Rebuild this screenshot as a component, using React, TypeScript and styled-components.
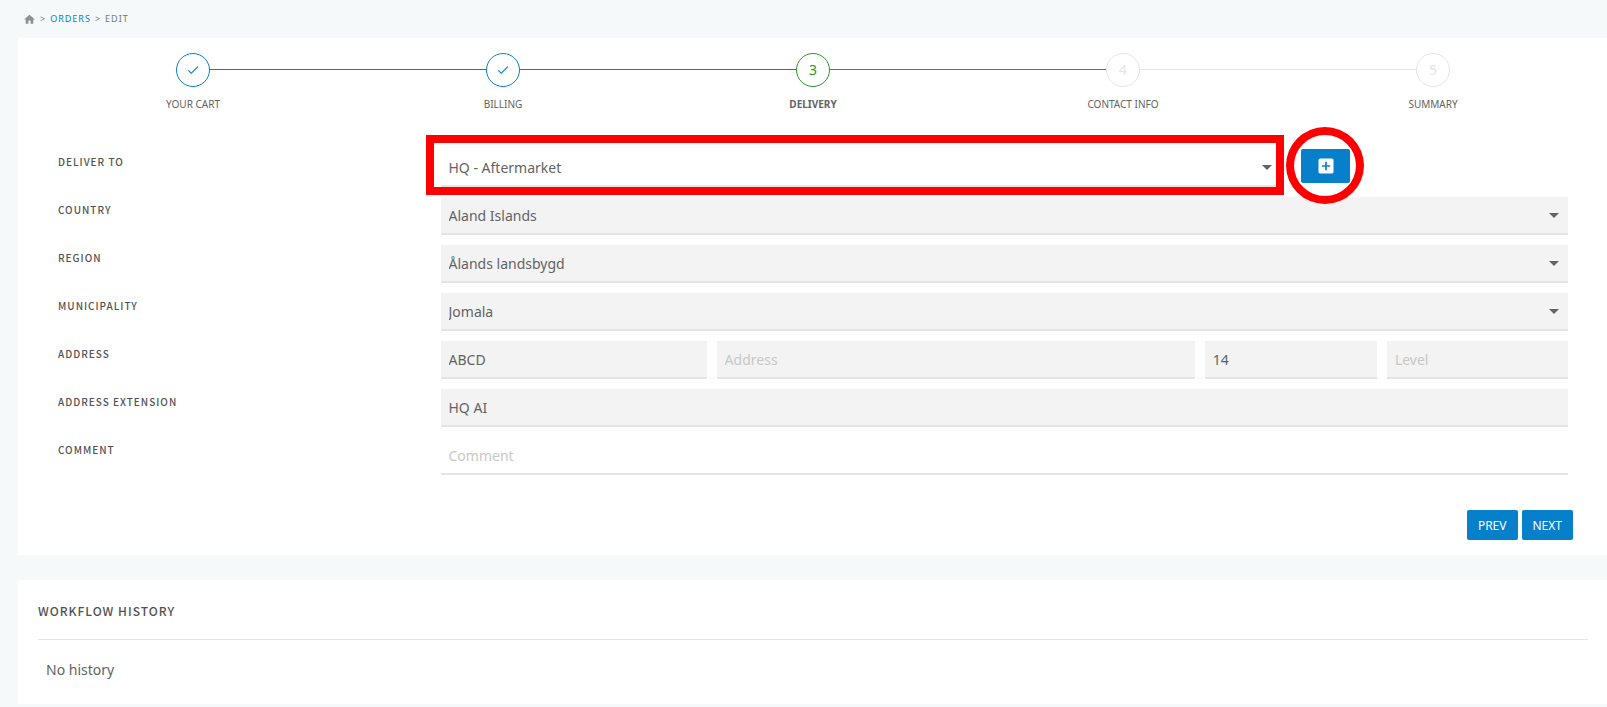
import React from "react";
import styled, { createGlobalStyle } from "styled-components";

const colors = {
  page: "#f5f9fa",
  blue: "#0780cb",
  green: "#28982a",
  idle: "#e5e5e5",
  text: "#636363",
  title: "#525252",
  field: "#f3f3f3",
  mark: "#ff0000",
};

const GlobalStyle = createGlobalStyle`
  *, *::before, *::after { box-sizing: border-box; }
  body {
    margin: 0;
    background: ${colors.page};
    color: ${colors.text};
    font: 14px/20px "Noto Sans", sans-serif;
  }
  button, input, select { font: inherit; color: inherit; }
`;

const titleFont = `"Noto Sans CJK SC", "Noto Sans", sans-serif`;

const Page = styled.main`
  padding-left: 18px;
`;

const Breadcrumbs = styled.nav`
  display: flex;
  align-items: center;
  gap: 4px;
  height: 38px;
  padding-left: 5px;
  font-size: 9px;
  line-height: 12px;
  letter-spacing: 1px;
  color: #777;
`;

const Crumb = styled.a`
  display: flex;
  color: ${colors.blue};
  text-decoration: none;
`;

const HomeCrumb = styled(Crumb)`
  color: #8f8f8f;
`;

const Card = styled.section`
  padding: 15px 19px 15px 20px;
  margin-bottom: 25px;
  background: #fff;
`;

const HistoryCard = styled(Card)`
  padding: 20px 19px 24px 20px;
  margin-bottom: 3px;
  border-radius: 2px 0 0 2px;
`;

const Steps = styled.ol`
  display: grid;
  grid-template-columns: repeat(5, 1fr);
  margin: 0 0 37px;
  padding: 0;
  list-style: none;
`;

const Step = styled.li`
  display: flex;
  flex-direction: column;
  gap: 9px;
`;

const Track = styled.div`
  display: flex;
  align-items: center;
`;

const Line = styled.span<{ $color: string }>`
  flex: 1;
  height: 2px;
  border-top: 1px solid ${(p) => p.$color};
`;

const Circle = styled.span<{ $color: string }>`
  display: flex;
  align-items: center;
  justify-content: center;
  width: 34px;
  height: 34px;
  border: 1px solid ${(p) => p.$color};
  border-radius: 50%;
  color: ${(p) => p.$color};
`;

const StepName = styled.span<{ $current?: boolean }>`
  font-size: 10px;
  line-height: 16px;
  font-weight: ${(p) => (p.$current ? 700 : 400)};
  text-align: center;
`;

const Form = styled.form`
  display: flex;
  flex-direction: column;
  gap: 10px;
`;

const FormRow = styled.div`
  display: grid;
  grid-template-columns: 1fr 3fr;
  padding: 0 10px;
`;

const Label = styled.label`
  padding: 5px 10px;
  color: ${colors.title};
  font-family: ${titleFont};
  font-size: 10px;
  line-height: 16px;
  font-weight: 500;
  letter-spacing: 1px;
`;

const Cell = styled.div`
  min-width: 0;
  padding: 0 10px;
`;

const SplitCell = styled.div`
  display: grid;
  grid-template-columns: 3fr 1fr;
`;

const AddressCell = styled(Cell)`
  display: grid;
  grid-template-columns: 266fr 478fr 172fr 181fr;
  gap: 10px;
`;

const fieldStyle = `
  display: block;
  width: 100%;
  min-width: 0;
  height: 38px;
  padding: 0 8px;
  border: 0;
  border-bottom: 2px solid ${colors.idle};
  border-radius: 0;
  outline: 0;
  opacity: 1;
  appearance: none;
`;

const TextField = styled.input`
  ${fieldStyle}
  background: ${(p) => (p.readOnly ? colors.field : "#fff")};
  &::placeholder { color: #c8c8c8; opacity: 1; }
`;

const SelectBox = styled.div`
  position: relative;
`;

const SelectField = styled.select`
  ${fieldStyle}
  padding-top: 2px;
  color: ${colors.text};
  background: ${(p) => (p.disabled ? colors.field : "#fff")};
`;

const Arrow = styled.svg`
  position: absolute;
  top: 6px;
  right: 2px;
  pointer-events: none;
`;

const SelectMark = styled.span`
  position: absolute;
  inset: -14px -3px -8px -15px;
  border: 8px solid ${colors.mark};
  pointer-events: none;
`;

const AddBox = styled.div`
  position: relative;
  width: 49px;
  height: 34px;
`;

const AddMark = styled.span`
  position: absolute;
  z-index: 1;
  inset: -22px -14px -21px -15px;
  border: 8px solid ${colors.mark};
  border-radius: 50%;
  pointer-events: none;
`;

const Button = styled.button`
  height: 30px;
  padding: 2px 11px 0;
  border: 0;
  border-radius: 2px;
  background: ${colors.blue};
  color: #fff;
  font-size: 12px;
  line-height: 16px;
  cursor: pointer;
`;

const AddButton = styled(Button)`
  display: flex;
  align-items: center;
  justify-content: center;
  width: 100%;
  height: 100%;
  padding: 0;
`;

const Actions = styled.div`
  display: flex;
  justify-content: flex-end;
  gap: 4px;
  padding: 25px 15px 0;
`;

const Heading = styled.h2`
  margin: 0;
  padding-bottom: 17px;
  border-bottom: 1px solid ${colors.idle};
  color: ${colors.title};
  font-family: ${titleFont};
  font-size: 12px;
  line-height: 22px;
  font-weight: 500;
  letter-spacing: 1px;
`;

const Empty = styled.p`
  margin: 20px 8px 0;
`;

const HomeIcon = () => (
  <svg width="13" height="13" viewBox="0 0 24 24" fill="currentColor" aria-hidden="true">
    <path d="M10 20v-6h4v6h5v-8h3L12 3 2 12h3v8z" />
  </svg>
);

const CheckIcon = () => (
  <svg width="14" height="14" viewBox="0 0 24 24" fill="currentColor" aria-hidden="true">
    <path d="M9 16.17L4.83 12l-1.42 1.41L9 19 21 7l-1.41-1.41z" />
  </svg>
);

const AddIcon = () => (
  <svg width="20" height="20" viewBox="0 0 24 24" fill="currentColor" aria-hidden="true">
    <path d="M19 3H5c-1.11 0-2 .9-2 2v14c0 1.1.89 2 2 2h14c1.1 0 2-.9 2-2V5c0-1.1-.9-2-2-2zm-2 10h-4v4h-2v-4H7v-2h4V7h2v4h4v2z" />
  </svg>
);

const ArrowIcon = () => (
  <Arrow width="24" height="24" viewBox="0 0 24 24" fill="currentColor" aria-hidden="true">
    <path d="M7 10l5 5 5-5z" />
  </Arrow>
);

const steps = [
  { name: "YOUR CART", before: "transparent", after: colors.blue, color: colors.blue, done: true },
  { name: "BILLING", before: colors.blue, after: colors.blue, color: colors.blue, done: true },
  { name: "DELIVERY", before: colors.blue, after: colors.green, color: colors.green, current: true },
  { name: "CONTACT INFO", before: colors.green, after: colors.idle, color: colors.idle },
  { name: "SUMMARY", before: colors.idle, after: "transparent", color: colors.idle },
];

const places = [
  { id: "country", label: "COUNTRY", value: "Aland Islands" },
  { id: "region", label: "REGION", value: "Ålands landsbygd" },
  { id: "municipality", label: "MUNICIPALITY", value: "Jomala" },
];

export default function App() {
  return (
    <>
      <GlobalStyle />
      <Page>
        <Breadcrumbs aria-label="Breadcrumb">
          <HomeCrumb href="#home" aria-label="Home">
            <HomeIcon />
          </HomeCrumb>
          <span>&gt;</span>
          <Crumb href="#orders">ORDERS</Crumb>
          <span>&gt;</span>
          <span>EDIT</span>
        </Breadcrumbs>

        <Card>
          <Steps>
            {steps.map((step, i) => (
              <Step key={step.name} aria-current={step.current ? "step" : undefined}>
                <Track>
                  <Line $color={step.before} />
                  <Circle $color={step.color}>{step.done ? <CheckIcon /> : i + 1}</Circle>
                  <Line $color={step.after} />
                </Track>
                <StepName $current={step.current}>{step.name}</StepName>
              </Step>
            ))}
          </Steps>

          <Form onSubmit={(e) => e.preventDefault()}>
            <FormRow>
              <Label htmlFor="deliver-to">DELIVER TO</Label>
              <SplitCell>
                <Cell>
                  <SelectBox>
                    <SelectField id="deliver-to">
                      <option>HQ - Aftermarket</option>
                    </SelectField>
                    <ArrowIcon />
                    <SelectMark />
                  </SelectBox>
                </Cell>
                <Cell>
                  <AddBox>
                    <AddButton type="button" aria-label="Add delivery place">
                      <AddIcon />
                    </AddButton>
                    <AddMark />
                  </AddBox>
                </Cell>
              </SplitCell>
            </FormRow>

            {places.map((place) => (
              <FormRow key={place.id}>
                <Label htmlFor={place.id}>{place.label}</Label>
                <Cell>
                  <SelectBox>
                    <SelectField id={place.id} disabled>
                      <option>{place.value}</option>
                    </SelectField>
                    <ArrowIcon />
                  </SelectBox>
                </Cell>
              </FormRow>
            ))}

            <FormRow>
              <Label htmlFor="postcode">ADDRESS</Label>
              <AddressCell>
                <TextField id="postcode" defaultValue="ABCD" readOnly />
                <TextField aria-label="Address" placeholder="Address" readOnly />
                <TextField aria-label="Number" defaultValue="14" readOnly />
                <TextField aria-label="Level" placeholder="Level" readOnly />
              </AddressCell>
            </FormRow>

            <FormRow>
              <Label htmlFor="extension">ADDRESS EXTENSION</Label>
              <Cell>
                <TextField id="extension" defaultValue="HQ AI" readOnly />
              </Cell>
            </FormRow>

            <FormRow>
              <Label htmlFor="comment">COMMENT</Label>
              <Cell>
                <TextField id="comment" placeholder="Comment" />
              </Cell>
            </FormRow>

            <Actions>
              <Button type="button">PREV</Button>
              <Button type="submit">NEXT</Button>
            </Actions>
          </Form>
        </Card>

        <HistoryCard>
          <Heading>WORKFLOW HISTORY</Heading>
          <Empty>No history</Empty>
        </HistoryCard>
      </Page>
    </>
  );
}
